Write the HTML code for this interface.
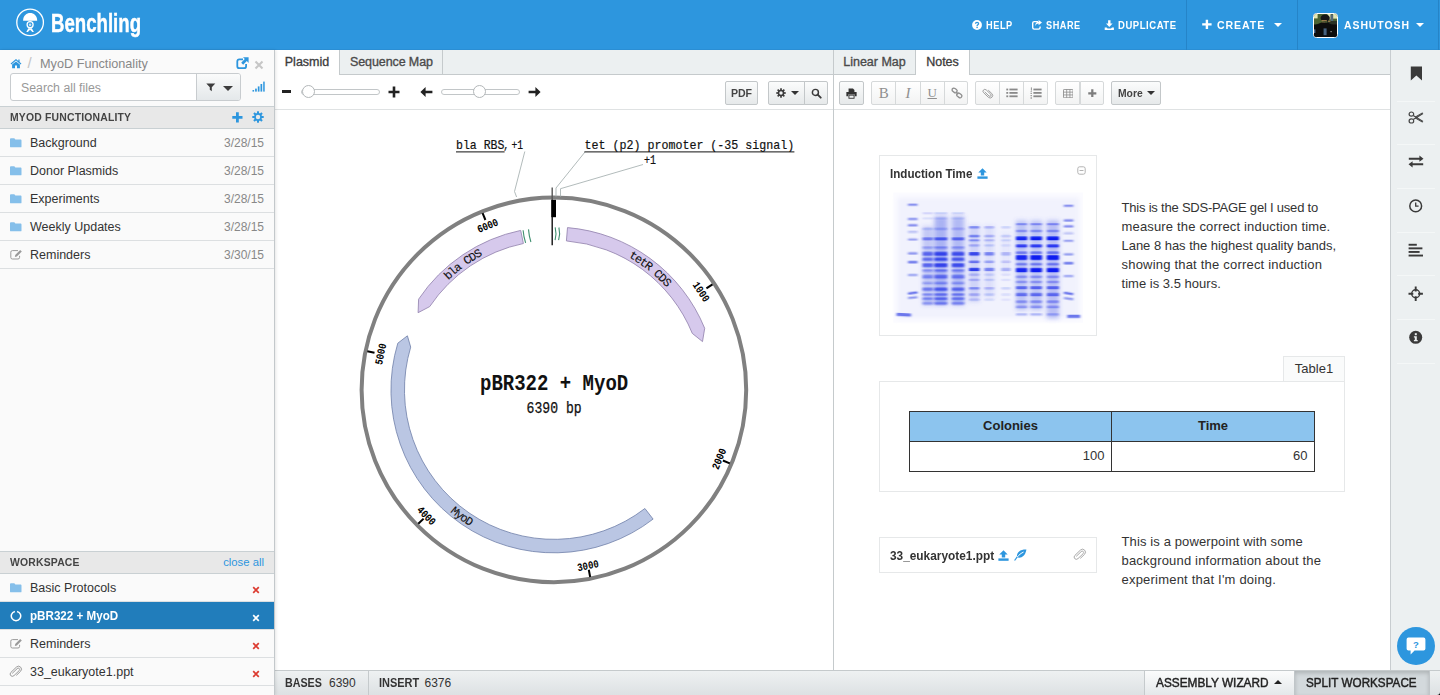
<!DOCTYPE html>
<html>
<head>
<meta charset="utf-8">
<title>Benchling</title>
<style>
*{box-sizing:border-box;margin:0;padding:0}
html,body{width:1440px;height:695px;overflow:hidden;background:#fff;font-family:"Liberation Sans",sans-serif;color:#333;font-size:13px}
.abs{position:absolute}
#hdr{position:absolute;left:0;top:0;width:1440px;height:50px;background:#2d96de;border-bottom:1px solid #2a8ed4}
#hdr .sep{position:absolute;top:0;width:1px;height:50px;background:#2584c8}
.nav{transform-origin:0 50%;position:absolute;top:0;height:50px;line-height:50px;color:#fff;font-weight:bold;font-size:10.5px;letter-spacing:.6px;white-space:nowrap}
#logo-txt{position:absolute;left:51px;top:5.8px;-webkit-text-stroke:.45px #fff;color:#fff;font-weight:bold;font-size:25px;line-height:34px;transform-origin:0 50%;transform:scaleX(.745);white-space:nowrap}
/* sidebar */
#side{position:absolute;left:0;top:50px;width:275px;height:645px;background:#fafafa;border-right:1px solid #c3c8cb;box-shadow:1px 0 3px rgba(0,0,0,.10);z-index:5}
.sechead{position:absolute;left:0;width:274px;height:23px;background:#e8e8e8;border-top:1px solid #c9d0d3;border-bottom:1px solid #c9d0d3;font-weight:bold;font-size:11px;line-height:21px;color:#444;padding-left:10px;letter-spacing:.2px;white-space:nowrap}
.sh{display:inline-block;transform-origin:0 50%;transform:scaleX(.945)}
.row{position:absolute;left:0;width:274px;height:28px;border-bottom:1px solid #dcdfe1;font-size:12.5px;line-height:27px;color:#333}
.row .nm{position:absolute;left:30px;top:1px;white-space:nowrap}
.row .dt{position:absolute;right:10px;top:1px;color:#888;font-size:12px}
.row .x{position:absolute;left:0;top:0;color:#dc3b30}
.row.sel{background:#217dbb;color:#fff}
.row.sel .x{color:#fff}
/* main */
.tabbar{position:absolute;top:50px;height:25px;background:#ecf0f1;border-bottom:1px solid #c5cacc}
.tab{position:absolute;top:0;height:25px;line-height:24px;font-size:12.5px;color:#4a4a4a;-webkit-text-stroke:.33px #4a4a4a;border-right:1px solid #c5cacc;padding:0 10px;white-space:nowrap}
.tab.act{background:#fff;height:26px;color:#333}
.tbar{position:absolute;top:75px;height:35px;background:#fff;border-bottom:1px solid #dfe2e3}
.btn{position:absolute;height:24px;border:1px solid #c3c7c9;border-radius:2px;background:linear-gradient(#fbfcfc,#e6e9ea);font-size:11.5px;line-height:22px;text-align:center;color:#444;font-weight:bold}
.btn.lt{background:linear-gradient(#fff,#f2f3f3);border-color:#d6d9da;color:#999}
.para{font-size:13px;line-height:19px;color:#333;white-space:nowrap}
.th{height:29px;line-height:27.6px;text-align:center;font-weight:bold;font-size:13px;color:#222}
.td{height:30px;line-height:27.6px;text-align:right;font-size:13px;color:#333}
#status{position:absolute;left:275px;top:670px;width:1165px;height:25px;background:linear-gradient(#eef1f2,#dde1e3);border-top:1px solid #c5cacc;font-size:12px;line-height:24px;color:#333}
.sb{display:inline-block;transform-origin:0 50%}
#rail{position:absolute;left:1390px;top:50px;width:50px;height:620px;background:#ecf0f1;border-left:1px solid #c8cdd0}
</style>
</head>
<body>
<!-- HEADER -->
<div id="hdr">
  <svg class="abs" style="left:15px;top:7px" width="31" height="31" viewBox="0 0 31 31">
    <circle cx="15.1" cy="15.4" r="13.3" fill="none" stroke="#fff" stroke-width="1.3"/>
    <path d="M8.1 13.7 C8.1 3.5 22.2 3.5 22.2 13.7 Z" fill="#fff"/>
    <circle cx="15.1" cy="17.7" r="3" fill="none" stroke="#fff" stroke-width="1.3"/>
    <circle cx="15.1" cy="17.7" r="1.3" fill="#fff" opacity=".75"/>
    <path d="M11.3 24.9 L13.4 21.2 L16.8 21.2 L18.9 24.9 L17.3 24.9 L15.1 22.7 L12.9 24.9 Z" fill="#fff"/>
  </svg>
  <div id="logo-txt">Benchling</div>
  <!-- help icon -->
  <svg class="abs" style="left:971px;top:19px" width="12" height="12" viewBox="0 0 12 12"><circle cx="6" cy="6" r="4.9" fill="#fff"/><path d="M4.5 4.7 C4.5 2.9 7.6 2.9 7.6 4.7 C7.6 5.8 6.1 5.8 6.1 7" fill="none" stroke="#2d96de" stroke-width="1.3"/><rect x="5.4" y="7.7" width="1.4" height="1.4" fill="#2d96de"/></svg>
  <div class="nav" id="n1" style="left:985.5px;transform:scaleX(.879)">HELP</div>
  <!-- share icon -->
  <svg class="abs" style="left:1031px;top:19px" width="12" height="12" viewBox="0 0 12 12"><path d="M7 2.6 H3.2 Q1.7 2.6 1.7 4.1 V8.6 Q1.7 10.1 3.2 10.1 H7.6 Q9.1 10.1 9.1 8.6 V7.6" fill="none" stroke="#fff" stroke-width="1.4"/><path d="M7.6 0.9 L11 3.6 L7.6 6.3 V4.6 Q5.2 4.6 4.4 7 Q4 2.9 7.6 2.7 Z" fill="#fff"/></svg>
  <div class="nav" id="n2" style="left:1045.8px;transform:scaleX(.872)">SHARE</div>
  <!-- download icon -->
  <svg class="abs" style="left:1104px;top:19px" width="11" height="12" viewBox="0 0 11 12"><path d="M4.1 1.2 H6.5 V4.6 H8.6 L5.3 8 L2 4.6 H4.1 Z" fill="#fff"/><path d="M0.7 8.6 H2.6 L3.6 9.6 H7 L8 8.6 H9.9 V10.9 H0.7 Z" fill="#fff"/></svg>
  <div class="nav" id="n3" style="left:1117.5px;transform:scaleX(.905)">DUPLICATE</div>
  <div class="sep" style="left:1186px"></div>
  <svg class="abs" style="left:1201px;top:19px" width="12" height="12" viewBox="0 0 12 12"><path d="M4.7 0.8 H7.1 V4.2 H10.6 V6.6 H7.1 V10.1 H4.7 V6.6 H1.2 V4.2 H4.7 Z" fill="#fff"/></svg>
  <div class="nav" id="n4" style="left:1217.4px;transform:scaleX(.927);font-size:11.4px;letter-spacing:1px">CREATE</div>
  <div class="abs" style="left:1274px;top:23px;width:0;height:0;border-left:4px solid transparent;border-right:4px solid transparent;border-top:4px solid #fff"></div>
  <div class="sep" style="left:1297px"></div>
  <div class="sep" style="left:1438px"></div>
  <!-- avatar -->
  <svg class="abs" style="left:1313px;top:13px" width="25" height="25" viewBox="0 0 25 25">
    <defs><clipPath id="avc"><rect x="1" y="1" width="23" height="23" rx="2"/></clipPath><filter id="avb"><feGaussianBlur stdDeviation="0.55"/></filter></defs>
    <rect x="0.5" y="0.5" width="24" height="24" rx="3" fill="#0c0d0e" stroke="#fff" stroke-width="1"/>
    <g clip-path="url(#avc)"><g filter="url(#avb)">
      <rect x="1" y="1" width="23" height="11.5" fill="#4b6230"/>
      <rect x="1" y="1" width="3.6" height="4.4" fill="#e6e8b4"/>
      <rect x="14.5" y="1" width="3.2" height="5.4" fill="#dfe3b0"/>
      <rect x="20" y="1" width="4" height="4.6" fill="#dfe4b2"/>
      <rect x="17.6" y="1.6" width="2.6" height="9" fill="#55697a"/>
      <rect x="14" y="8" width="10" height="5" fill="#2b3326"/>
      <ellipse cx="12.2" cy="5" rx="4.6" ry="3.6" fill="#121312"/>
      <rect x="8.6" y="7.2" width="5.2" height="1" fill="#b9935a"/>
      <rect x="8.8" y="9" width="3.4" height="2.6" fill="#7d6a45"/>
      <rect x="15" y="7.8" width="2.4" height="0.9" fill="#b98f55"/>
      <rect x="1" y="11.5" width="23" height="12.5" fill="#0c0d0e"/>
      <path d="M1 12.5 L8.5 9.5 L15 9.8 L24 14 V24 H1 Z" fill="#0e0f10"/>
      <rect x="10.6" y="15.4" width="3" height="6.8" fill="#46627f"/>
      <rect x="1" y="16.4" width="1.4" height="3.6" fill="#4d6f94"/>
      <rect x="17.4" y="18" width="1.4" height="1.2" fill="#8a8a86"/>
    </g></g>
  </svg>
  <div class="nav" id="n5" style="left:1343.6px;transform:scaleX(.919);font-size:11.4px;letter-spacing:1px">ASHUTOSH</div>
  <div class="abs" style="left:1415.5px;top:23px;width:0;height:0;border-left:4px solid transparent;border-right:4px solid transparent;border-top:4px solid #fff"></div>
</div>

<!-- SIDEBAR -->
<div id="side">
  <!-- home -->
  <svg class="abs" style="left:10px;top:8px" width="12" height="11" viewBox="0 0 12 11"><path d="M6 1 L0.6 5.6 L1.3 6.4 L6 2.5 L10.7 6.4 L11.4 5.6 L9.6 4.1 V1.6 H8.3 V3 Z" fill="#2d96de"/><path d="M6 3.4 L2.1 6.6 V10.3 H5 V7.6 H7 V10.3 H9.9 V6.6 Z" fill="#2d96de"/></svg>
  <div class="abs" style="left:27.5px;top:4px;font-size:15px;color:#c4c4c4">/</div>
  <div class="abs" id="crumb" style="left:40px;top:6.5px;font-size:12.7px;color:#888;white-space:nowrap">MyoD Functionality</div>
  <!-- external link -->
  <svg class="abs" style="left:236px;top:7px" width="13" height="13" viewBox="0 0 13 13"><path d="M7 2.4 H3.3 Q1.3 2.4 1.3 4.4 V9.2 Q1.3 11.2 3.3 11.2 H8.1 Q10.1 11.2 10.1 9.2 V7" fill="none" stroke="#2d96de" stroke-width="1.8"/><path d="M7 0.3 H12.6 V5.9 L10.8 4.1 L7.2 7.7 L5.2 5.7 L8.8 2.1 Z" fill="#2d96de"/></svg>
  <svg class="abs" style="left:254px;top:10px" width="10" height="10" viewBox="0 0 10 10"><path d="M1.5 1.5 L8.5 8.5 M8.5 1.5 L1.5 8.5" stroke="#c6c6c6" stroke-width="2.1"/></svg>
  <div class="abs" style="left:10px;top:23px;width:231px;height:28px;border:1px solid #c8cccf;border-radius:3px;background:#fff"></div>
  <div class="abs" style="left:196px;top:24px;width:44px;height:26px;border-left:1px solid #c8cccf;background:linear-gradient(#fafbfb,#e4e8ea);border-radius:0 2px 2px 0"></div>
  <div class="abs" id="srch" style="left:21px;top:30.5px;font-size:12.3px;color:#999">Search all files</div>
  <!-- filter -->
  <svg class="abs" style="left:206px;top:33px" width="10" height="9" viewBox="0 0 10 9"><path d="M0.3 0.5 H9.3 L5.8 4.3 V8.3 L3.8 6.8 V4.3 Z" fill="#3d3d3d"/></svg>
  <div class="abs" style="left:223px;top:36px;width:0;height:0;border-left:5px solid transparent;border-right:5px solid transparent;border-top:5px solid #3d3d3d"></div>
  <!-- signal -->
  <svg class="abs" style="left:252px;top:31px" width="13" height="12" viewBox="0 0 13 12"><rect x="0.5" y="9" width="1.6" height="1.6" fill="#2d96de"/><rect x="3.1" y="7.6" width="1.7" height="3" fill="#2d96de"/><rect x="5.8" y="5.4" width="1.7" height="5.2" fill="#2d96de"/><rect x="8.5" y="3" width="1.7" height="7.6" fill="#2d96de"/><rect x="11.2" y="0.6" width="1.5" height="10" fill="#2d96de"/></svg>
  <div class="sechead" style="top:56px"><span class="sh" id="sh1">MYOD FUNCTIONALITY</span>
    <svg class="abs" style="left:232px;top:5px" width="11" height="11" viewBox="0 0 11 11"><path d="M4 0.3 H6.8 V4 H10.5 V6.8 H6.8 V10.5 H4 V6.8 H0.3 V4 H4 Z" fill="#2d96de"/></svg>
    <svg class="abs" style="left:252px;top:4px" width="12" height="12" viewBox="0 0 12 12"><g fill="#2d96de"><circle cx="6" cy="6" r="3.9"/><rect x="5" y="0.3" width="2" height="11.4"/><rect x="5" y="0.3" width="2" height="11.4" transform="rotate(45 6 6)"/><rect x="5" y="0.3" width="2" height="11.4" transform="rotate(90 6 6)"/><rect x="5" y="0.3" width="2" height="11.4" transform="rotate(135 6 6)"/></g><circle cx="6" cy="6" r="2.2" fill="#e8e8e8"/></svg>
  </div>
  <div class="row" style="top:79px"><svg class="abs" style="left:10px;top:9px" width="12" height="10" viewBox="0 0 12 10"><path d="M0 1.2 Q0 0.3 0.9 0.3 H4 Q4.7 0.3 5 1 L5.3 1.6 H10.6 Q11.5 1.6 11.5 2.5 V8.4 Q11.5 9.3 10.6 9.3 H0.9 Q0 9.3 0 8.4 Z" fill="#85bfea"/></svg><span class="nm">Background</span><span class="dt">3/28/15</span></div>
  <div class="row" style="top:107px"><svg class="abs" style="left:10px;top:9px" width="12" height="10" viewBox="0 0 12 10"><path d="M0 1.2 Q0 0.3 0.9 0.3 H4 Q4.7 0.3 5 1 L5.3 1.6 H10.6 Q11.5 1.6 11.5 2.5 V8.4 Q11.5 9.3 10.6 9.3 H0.9 Q0 9.3 0 8.4 Z" fill="#85bfea"/></svg><span class="nm">Donor Plasmids</span><span class="dt">3/28/15</span></div>
  <div class="row" style="top:135px"><svg class="abs" style="left:10px;top:9px" width="12" height="10" viewBox="0 0 12 10"><path d="M0 1.2 Q0 0.3 0.9 0.3 H4 Q4.7 0.3 5 1 L5.3 1.6 H10.6 Q11.5 1.6 11.5 2.5 V8.4 Q11.5 9.3 10.6 9.3 H0.9 Q0 9.3 0 8.4 Z" fill="#85bfea"/></svg><span class="nm">Experiments</span><span class="dt">3/28/15</span></div>
  <div class="row" style="top:163px"><svg class="abs" style="left:10px;top:9px" width="12" height="10" viewBox="0 0 12 10"><path d="M0 1.2 Q0 0.3 0.9 0.3 H4 Q4.7 0.3 5 1 L5.3 1.6 H10.6 Q11.5 1.6 11.5 2.5 V8.4 Q11.5 9.3 10.6 9.3 H0.9 Q0 9.3 0 8.4 Z" fill="#85bfea"/></svg><span class="nm">Weekly Updates</span><span class="dt">3/28/15</span></div>
  <div class="row" style="top:191px"><svg class="abs" style="left:10px;top:8px" width="13" height="11" viewBox="0 0 13 11"><path d="M8 1.6 H2.4 Q0.8 1.6 0.8 3.2 V8.4 Q0.8 10 2.4 10 H8 Q9.6 10 9.6 8.4 V6.8" fill="none" stroke="#9a9a9a" stroke-width="1"/><path d="M5.2 6 L10.2 1 L11.8 2.6 L6.8 7.6 L4.9 7.9 Z" fill="#9a9a9a"/></svg><span class="nm">Reminders</span><span class="dt">3/30/15</span></div>

  <div class="sechead" style="top:501px"><span class="sh" id="sh2">WORKSPACE</span><span style="position:absolute;right:10px;top:0;color:#2d96de;font-weight:normal;font-size:11.3px;letter-spacing:0">close all</span></div>
  <div class="row" style="top:524px"><svg class="abs" style="left:10px;top:9px" width="12" height="10" viewBox="0 0 12 10"><path d="M0 1.2 Q0 0.3 0.9 0.3 H4 Q4.7 0.3 5 1 L5.3 1.6 H10.6 Q11.5 1.6 11.5 2.5 V8.4 Q11.5 9.3 10.6 9.3 H0.9 Q0 9.3 0 8.4 Z" fill="#85bfea"/></svg><span class="nm">Basic Protocols</span><span class="x"><svg class="abs" style="left:252px;top:11.5px" width="8" height="8" viewBox="0 0 8 8"><path d="M1.2 1.2 L6.8 6.8 M6.8 1.2 L1.2 6.8" stroke="currentColor" stroke-width="1.7"/></svg></span></div>
  <div class="row sel" style="top:552px"><svg class="abs" style="left:10px;top:8px" width="12" height="12" viewBox="0 0 12 12"><path d="M7.1 1.4 A4.7 4.7 0 1 1 4.9 1.4" fill="none" stroke="#fff" stroke-width="1.5"/></svg><span class="nm" style="font-weight:bold;transform-origin:0 50%;transform:scaleX(.93)">pBR322 + MyoD</span><span class="x"><svg class="abs" style="left:252px;top:11.5px" width="8" height="8" viewBox="0 0 8 8"><path d="M1.2 1.2 L6.8 6.8 M6.8 1.2 L1.2 6.8" stroke="currentColor" stroke-width="1.7"/></svg></span></div>
  <div class="row" style="top:580px"><svg class="abs" style="left:10px;top:8px" width="13" height="11" viewBox="0 0 13 11"><path d="M8 1.6 H2.4 Q0.8 1.6 0.8 3.2 V8.4 Q0.8 10 2.4 10 H8 Q9.6 10 9.6 8.4 V6.8" fill="none" stroke="#9a9a9a" stroke-width="1"/><path d="M5.2 6 L10.2 1 L11.8 2.6 L6.8 7.6 L4.9 7.9 Z" fill="#9a9a9a"/></svg><span class="nm">Reminders</span><span class="x"><svg class="abs" style="left:252px;top:11.5px" width="8" height="8" viewBox="0 0 8 8"><path d="M1.2 1.2 L6.8 6.8 M6.8 1.2 L1.2 6.8" stroke="currentColor" stroke-width="1.7"/></svg></span></div>
  <div class="row" style="top:608px"><svg class="abs" style="left:9px;top:7px" width="14" height="13" viewBox="0 0 14 13"><path d="M3.2 8.4 L8.2 3.6 Q9.3 2.6 10.3 3.6 Q11.2 4.6 10.2 5.6 L5 10.6 Q3.2 12.2 1.7 10.6 Q0.3 9 1.9 7.4 L7.4 2.1 Q9.6 0.1 11.7 2.2 Q13.6 4.3 11.5 6.4 L7.3 10.4" fill="none" stroke="#9a9a9a" stroke-width="1"/></svg><span class="nm">33_eukaryote1.ppt</span><span class="x"><svg class="abs" style="left:252px;top:11.5px" width="8" height="8" viewBox="0 0 8 8"><path d="M1.2 1.2 L6.8 6.8 M6.8 1.2 L1.2 6.8" stroke="currentColor" stroke-width="1.7"/></svg></span></div>
</div>

<!-- LEFT PANEL (plasmid) -->
<div class="tabbar" style="left:275px;width:559px">
  <div class="tab act" style="left:0;width:65px;padding:0;text-align:center">Plasmid</div>
  <div class="tab" style="left:65px;padding:0 9px 0 10px;letter-spacing:-.1px">Sequence Map</div>
</div>
<div class="tbar" style="left:275px;width:559px">
  <!-- zoom slider -->
  <div class="abs" style="left:7px;top:15.3px;width:9px;height:2.6px;background:#222"></div>
  <div class="abs" style="left:26px;top:13.5px;width:79px;height:6px;border:1px solid #c2c6c8;border-radius:3px;background:#fff"></div>
  <div class="abs" style="left:26.5px;top:10px;width:13px;height:13px;border:1px solid #b3b7b9;border-radius:50%;background:#fff"></div>
  <svg class="abs" style="left:113px;top:11px" width="12" height="12" viewBox="0 0 12 12"><path d="M4.7 0.5 H7.3 V4.7 H11.5 V7.3 H7.3 V11.5 H4.7 V7.3 H0.5 V4.7 H4.7 Z" fill="#222"/></svg>
  <!-- rotate slider -->
  <svg class="abs" style="left:145px;top:11px" width="13" height="12" viewBox="0 0 13 12"><path d="M0.4 6 L5.6 1 V4.7 H12.4 V7.3 H5.6 V11 Z" fill="#222"/></svg>
  <div class="abs" style="left:165.5px;top:13.5px;width:79px;height:6px;border:1px solid #c2c6c8;border-radius:3px;background:#fff"></div>
  <div class="abs" style="left:197.5px;top:10px;width:13px;height:13px;border:1px solid #b3b7b9;border-radius:50%;background:#fff"></div>
  <svg class="abs" style="left:253px;top:11px" width="13" height="12" viewBox="0 0 13 12"><path d="M12.6 6 L7.4 1 V4.7 H0.6 V7.3 H7.4 V11 Z" fill="#222"/></svg>
  <!-- buttons -->
  <div class="btn" style="left:450px;top:6px;width:33px"><span style="display:inline-block;transform:scaleX(.92)">PDF</span></div>
  <div class="btn" style="left:493px;top:6px;width:37px;border-radius:2px 0 0 2px">
    <svg class="abs" style="left:6.5px;top:6px" width="10" height="10" viewBox="0 0 12 12"><g fill="#3a3a3a"><circle cx="6" cy="6" r="3.9"/><rect x="5" y="0.3" width="2" height="11.4"/><rect x="5" y="0.3" width="2" height="11.4" transform="rotate(45 6 6)"/><rect x="5" y="0.3" width="2" height="11.4" transform="rotate(90 6 6)"/><rect x="5" y="0.3" width="2" height="11.4" transform="rotate(135 6 6)"/></g><circle cx="6" cy="6" r="2.1" fill="#f1f3f4"/></svg>
    <div class="abs" style="left:22px;top:8.5px;width:0;height:0;border-left:4px solid transparent;border-right:4px solid transparent;border-top:4px solid #333"></div>
  </div>
  <div class="btn" style="left:529px;top:6px;width:24px;border-radius:0 2px 2px 0">
    <svg class="abs" style="left:5.5px;top:5.5px" width="11" height="11" viewBox="0 0 12 12"><circle cx="4.8" cy="4.8" r="3.3" fill="none" stroke="#3a3a3a" stroke-width="1.6"/><path d="M7.3 7.3 L10.6 10.6" stroke="#3a3a3a" stroke-width="2" stroke-linecap="round"/></svg>
  </div>
</div>
<div class="abs" style="left:833px;top:50px;width:1px;height:620px;background:#c5cacc"></div>

<!--PLASMID-START-->
<svg class="abs" style="left:275px;top:110px" width="558" height="560" viewBox="275 110 558 560" font-family="Liberation Mono, monospace">
<circle cx="553.9" cy="389.9" r="192.3" fill="none" stroke="#808080" stroke-width="4"/>
<path d="M520.7 230.4 A162.9 162.9 0 0 0 418.6 299.2 L418.1 312.7 L429.7 306.6 A149.5 149.5 0 0 1 523.4 243.5 Z" fill="#d6c9ec" stroke="#8f7fab" stroke-width="0.8"/>
<path d="M567.5 227.6 A162.9 162.9 0 0 1 704.7 328.3 L702.5 341.6 L692.3 333.4 A149.5 149.5 0 0 0 566.4 240.9 Z" fill="#d6c9ec" stroke="#8f7fab" stroke-width="0.8"/>
<path d="M653.1 519.1 A162.9 162.9 0 0 1 397.8 343.2 L407.4 335.8 L410.7 347.1 A149.5 149.5 0 0 0 644.9 508.5 Z" fill="#bac6e3" stroke="#6f7fa8" stroke-width="0.8"/>
<path d="M706.4 288.4 L712.5 284.3" stroke="#000" stroke-width="2"/>
<text x="691.3" y="291.2" transform="rotate(56.34 702.1 291.2)" font-size="10.9" font-weight="bold" dy="4.6" textLength="21.6" lengthAdjust="spacingAndGlyphs">1000</text>
<path d="M722.9 460.5 L729.8 463.4" stroke="#000" stroke-width="2"/>
<text x="707.3" y="458.5" transform="rotate(-67.32 718.1 458.5)" font-size="10.9" font-weight="bold" dy="4.6" textLength="21.6" lengthAdjust="spacingAndGlyphs">2000</text>
<path d="M588.8 569.7 L590.2 577.0" stroke="#000" stroke-width="2"/>
<text x="577.0" y="564.6" transform="rotate(-10.99 587.8 564.6)" font-size="10.9" font-weight="bold" dy="4.6" textLength="21.6" lengthAdjust="spacingAndGlyphs">3000</text>
<path d="M423.6 518.6 L418.3 523.8" stroke="#000" stroke-width="2"/>
<text x="416.5" y="515.0" transform="rotate(45.35 427.3 515.0)" font-size="10.9" font-weight="bold" dy="4.6" textLength="21.6" lengthAdjust="spacingAndGlyphs">4000</text>
<path d="M374.5 352.8 L367.3 351.3" stroke="#000" stroke-width="2"/>
<text x="368.8" y="353.8" transform="rotate(281.69 379.6 353.8)" font-size="10.9" font-weight="bold" dy="4.6" textLength="21.6" lengthAdjust="spacingAndGlyphs">5000</text>
<path d="M485.4 220.0 L482.6 213.1" stroke="#000" stroke-width="2"/>
<text x="476.5" y="224.8" transform="rotate(338.03 487.3 224.8)" font-size="10.9" font-weight="bold" dy="4.6" textLength="21.6" lengthAdjust="spacingAndGlyphs">6000</text>
<defs>
<path id="tp-bla" d="M421.5 314.7 A152.3 152.3 0 0 1 522.8 240.8"/>
<path id="tp-tet" d="M566.6 238.1 A152.3 152.3 0 0 1 698.7 342.8"/>
<path id="tp-myo" d="M403.7 334.5 A160.1 160.1 0 0 0 652.1 516.3"/>
</defs>
<text font-size="11.8" fill="#111" stroke="#111" stroke-width=".12" letter-spacing="-1.1"><textPath href="#tp-bla" startOffset="50%" text-anchor="middle">bla CDS</textPath></text>
<text font-size="11.8" fill="#111" stroke="#111" stroke-width=".12" letter-spacing="-1.1"><textPath href="#tp-tet" startOffset="50%" text-anchor="middle">tetR CDS</textPath></text>
<text font-size="11.8" fill="#111" stroke="#111" stroke-width=".12" letter-spacing="-1.1"><textPath href="#tp-myo" startOffset="50%" text-anchor="middle">MyoD</textPath></text>
<path d="M552.2 187.5 L552.2 200" stroke="#555" stroke-width="1.4"/>
<path d="M552.2 200 L552.2 245.2" stroke="#111" stroke-width="1.4"/>
<rect x="551.3" y="199.8" width="4.7" height="17.4" fill="#000"/>
<path d="M523.1 230.2 Q523.6 236.5 525.6 242.8" stroke="#3f8f6f" stroke-width="1.1" fill="none"/>
<path d="M528.5 229.4 Q529 235.8 530.9 242" stroke="#3f8f6f" stroke-width="1.1" fill="none"/>
<path d="M555.2 227.4 Q556.8 233.7 555.1 240.2" stroke="#3f8f6f" stroke-width="1.1" fill="none"/>
<path d="M558.9 227.5 Q560.5 233.8 558.6 240.2" stroke="#3f8f6f" stroke-width="1.1" fill="none"/>
<path d="M524.8 151.5 L514.5 191.5 L516.6 197" stroke="#a9b3b3" stroke-width="0.9" fill="none"/>
<path d="M585 152 L556 188 L556 196.5" stroke="#a9b3b3" stroke-width="0.9" fill="none"/>
<path d="M643 164.5 L560.5 188.7 L560.5 196.5" stroke="#a9b3b3" stroke-width="0.9" fill="none"/>
<text x="456" y="149.4" font-size="13.4" fill="#111" stroke="#111" stroke-width=".2" lengthAdjust="spacingAndGlyphs" textLength="48.4">bla RBS</text>
<path d="M456 151.9 H504.6" stroke="#111" stroke-width="1"/>
<text x="503.2" y="149.4" font-size="13.4" fill="#111" stroke="#111" stroke-width=".2" lengthAdjust="spacingAndGlyphs" textLength="6">,</text>
<text x="511.4" y="149.4" font-size="13.4" fill="#111" stroke="#111" stroke-width=".2" lengthAdjust="spacingAndGlyphs" textLength="11.6">+1</text>
<text x="584.6" y="149.4" font-size="13.4" fill="#111" stroke="#111" stroke-width=".2" lengthAdjust="spacingAndGlyphs" textLength="209.6">tet (p2) promoter (-35 signal)</text>
<path d="M584.4 151.9 H794.4" stroke="#111" stroke-width="1"/>
<text x="644" y="164.3" font-size="13.4" fill="#111" stroke="#111" stroke-width=".2" lengthAdjust="spacingAndGlyphs" textLength="12">+1</text>
<text x="480" y="389.9" font-size="22.6" font-weight="bold" fill="#111" textLength="148.2" lengthAdjust="spacingAndGlyphs">pBR322 + MyoD</text>
<text x="526.6" y="412.9" font-size="15.8" fill="#111" stroke="#111" stroke-width=".25" textLength="55" lengthAdjust="spacingAndGlyphs">6390 bp</text>
</svg>
<!--PLASMID-END-->

<!-- RIGHT PANEL (notes) -->
<div class="tabbar" style="left:834px;width:556px">
  <div class="tab" style="left:0;width:82px;padding:0;text-align:center">Linear Map</div>
  <div class="tab act" style="left:82px;width:54px;padding:0;text-align:center">Notes</div>
</div>
<div class="tbar" style="left:834px;width:556px">
<div class="btn" style="left:5px;top:6px;width:25px"><svg class="abs" style="left:6px;top:6px" width="11" height="11" viewBox="0 0 12 12"><path d="M2.8 0.6 H7.6 L9.2 2.2 V4.4 H2.8 Z" fill="#333"/><path d="M0.4 4.4 H11.6 V9 H9.6 V7 H2.4 V9 H0.4 Z" fill="#333"/><rect x="3.2" y="7.8" width="5.6" height="3.4" fill="none" stroke="#333" stroke-width="1"/></svg></div>
<div class="btn lt" style="left:37.2px;top:6px;width:25.2px;border-radius:2px 0 0 2px"><span style="font-family:'Liberation Serif',serif;font-size:15px;font-weight:normal;color:#8f8f8f;line-height:23px">B</span></div>
<div class="btn lt" style="left:61.4px;top:6px;width:25.2px;border-radius:0"><span style="font-family:'Liberation Serif',serif;font-size:15px;font-style:italic;font-weight:normal;color:#8f8f8f;line-height:23px">I</span></div>
<div class="btn lt" style="left:85.6px;top:6px;width:25.2px;border-radius:0"><span style="font-family:'Liberation Serif',serif;font-size:13px;font-weight:normal;color:#8f8f8f;text-decoration:underline;line-height:22.5px">U</span></div>
<div class="btn lt" style="left:109.8px;top:6px;width:24.2px;border-radius:0 2px 2px 0"><svg class="abs" style="left:6px;top:5px" width="12" height="12" viewBox="0 0 12 12"><g fill="none" stroke="#8f8f8f" stroke-width="1.3"><rect x="0.9" y="1.6" width="5.4" height="3.6" rx="1.8" transform="rotate(38 3.6 3.4)"/><rect x="5.6" y="6.6" width="5.4" height="3.6" rx="1.8" transform="rotate(38 8.3 8.4)"/><path d="M4.8 4.6 L7.2 7.2"/></g></svg></div>
<div class="btn lt" style="left:141.0px;top:6px;width:25.2px;border-radius:2px 0 0 2px"><svg class="abs" style="left:6px;top:4.5px" width="12" height="13" viewBox="0 0 14 13"><path d="M10.8 4.6 L5.8 9.4 Q4.7 10.4 3.7 9.4 Q2.8 8.4 3.8 7.4 L9 2.4 Q10.8 0.8 12.3 2.4 Q13.7 4 12.1 5.6 L6.6 10.9 Q4.4 12.9 2.3 10.8 Q0.4 8.7 2.5 6.6 L6.7 2.6" fill="none" stroke="#9a9a9a" stroke-width="1.1" transform="translate(14 0) scale(-1 1)"/></svg></div>
<div class="btn lt" style="left:165.2px;top:6px;width:25.2px;border-radius:0"><svg class="abs" style="left:6px;top:6px" width="12" height="10" viewBox="0 0 12 10"><g fill="#8a8a8a"><rect x="0.3" y="0.6" width="1.9" height="1.8"/><rect x="3.4" y="0.6" width="8.2" height="1.8"/><rect x="0.3" y="4" width="1.9" height="1.8"/><rect x="3.4" y="4" width="8.2" height="1.8"/><rect x="0.3" y="7.4" width="1.9" height="1.8"/><rect x="3.4" y="7.4" width="8.2" height="1.8"/></g></svg></div>
<div class="btn lt" style="left:189.4px;top:6px;width:24.2px;border-radius:0 2px 2px 0"><svg class="abs" style="left:6px;top:5px" width="12" height="12" viewBox="0 0 12 12"><g fill="#8a8a8a"><rect x="3.4" y="1.6" width="8.2" height="1.8"/><rect x="3.4" y="5" width="8.2" height="1.8"/><rect x="3.4" y="8.4" width="8.2" height="1.8"/><rect x="0.9" y="0.4" width="0.9" height="3.2"/><rect x="0.5" y="4.4" width="1.5" height="0.8"/><rect x="0.5" y="6" width="1.5" height="0.8"/><rect x="0.5" y="8.2" width="1.5" height="0.8"/><rect x="0.5" y="9.8" width="1.5" height="0.8"/><rect x="0.5" y="11.2" width="1.5" height="0.6"/></g></svg></div>
<div class="btn lt" style="left:221.3px;top:6px;width:25.2px;border-radius:2px 0 0 2px"><svg class="abs" style="left:6.5px;top:6.5px" width="10.5" height="9.6" viewBox="0 0 12 11"><rect x="0.5" y="0.5" width="11" height="9.6" rx="0.8" fill="none" stroke="#8a8a8a" stroke-width="1"/><path d="M0.5 3.6 H11.5 M0.5 6.8 H11.5 M4.2 0.5 V10 M7.9 0.5 V10" stroke="#8a8a8a" stroke-width="0.9"/></svg></div>
<div class="btn lt" style="left:245.5px;top:6px;width:24.2px;border-radius:0 2px 2px 0"><svg class="abs" style="left:7.5px;top:6.5px" width="8.6" height="8.6" viewBox="0 0 10 10"><path d="M3.7 0.3 H6.3 V3.7 H9.7 V6.3 H6.3 V9.7 H3.7 V6.3 H0.3 V3.7 H3.7 Z" fill="#7d7d7d"/></svg></div>
<div class="btn" style="left:277px;top:6px;width:50px;text-align:left;padding-left:6px"><span style="display:inline-block;transform-origin:0 50%;transform:scaleX(.9)">More</span><div class="abs" style="left:35px;top:9px;width:0;height:0;border-left:4px solid transparent;border-right:4px solid transparent;border-top:4px solid #333"></div></div>
</div>


<!-- NOTES CONTENT -->
<div id="notes">
  <div class="abs" style="left:879px;top:155px;width:218px;height:181px;border:1px solid #e6e8e9;background:#fff"></div>
  <div class="abs" id="ind" style="left:889.5px;top:166.6px;font-size:12px;font-weight:bold;color:#333;white-space:nowrap;transform-origin:0 50%;transform:scaleX(.968)">Induction Time</div>
  <svg class="abs" style="left:977px;top:168px" width="11" height="11" viewBox="0 0 11 11"><path d="M5.5 0.3 L9.7 4.6 H7.2 V7.4 H3.8 V4.6 H1.3 Z" fill="#2d96de"/><rect x="0.4" y="8.4" width="10.2" height="2.4" fill="#2d96de"/></svg>
  <svg class="abs" style="left:1077px;top:166px" width="9" height="9" viewBox="0 0 10 10"><rect x="0.9" y="0.9" width="8.2" height="8.2" rx="2" fill="none" stroke="#aaa" stroke-width="1"/><path d="M2.8 5 H7.2" stroke="#aaa" stroke-width="1"/></svg>
<!--GEL-START-->
<svg class="abs" style="left:885px;top:185px" width="210" height="145" viewBox="0 0 1007 695">
<defs><filter id="gb" x="-20%" y="-20%" width="140%" height="140%"><feGaussianBlur stdDeviation="5 3.8"/></filter><filter id="gb2" x="-20%" y="-20%" width="140%" height="140%"><feGaussianBlur stdDeviation="11 10"/></filter></defs>
<rect x="40" y="36" width="910" height="624" fill="#fbfbff"/>
<rect x="60" y="60" width="870" height="580" fill="#f1f2fd" filter="url(#gb2)"/>
<g filter="url(#gb2)">
<rect x="180" y="200" width="50" height="375" fill="#5566e6" opacity="0.30"/>
<rect x="237" y="150" width="62" height="425" fill="#5566e6" opacity="0.45"/>
<rect x="320" y="150" width="60" height="425" fill="#5566e6" opacity="0.40"/>
<rect x="402" y="195" width="52" height="365" fill="#5566e6" opacity="0.22"/>
<rect x="476" y="195" width="48" height="345" fill="#5566e6" opacity="0.13"/>
<rect x="557" y="230" width="46" height="190" fill="#5566e6" opacity="0.08"/>
<rect x="628" y="170" width="54" height="430" fill="#5566e6" opacity="0.32"/>
<rect x="697" y="170" width="56" height="430" fill="#5566e6" opacity="0.32"/>
<rect x="776" y="170" width="58" height="470" fill="#5566e6" opacity="0.36"/>
</g>
<g filter="url(#gb)">
<rect x="110" y="89" width="46" height="11" rx="4" fill="#3545e4" opacity="0.55"/>
<rect x="110" y="157" width="46" height="11" rx="4" fill="#3545e4" opacity="0.55"/>
<rect x="110" y="187" width="46" height="11" rx="4" fill="#3545e4" opacity="0.60"/>
<rect x="110" y="219" width="46" height="11" rx="4" fill="#3545e4" opacity="0.25"/>
<rect x="110" y="256" width="46" height="11" rx="4" fill="#3545e4" opacity="0.45"/>
<rect x="110" y="322" width="46" height="11" rx="4" fill="#3545e4" opacity="0.50"/>
<rect x="110" y="364" width="46" height="11" rx="4" fill="#3545e4" opacity="0.70"/>
<rect x="110" y="426" width="46" height="11" rx="4" fill="#3545e4" opacity="0.45"/>
<rect x="110" y="512" width="46" height="11" rx="4" fill="#3545e4" opacity="0.75" transform="rotate(-6 133 518)"/>
<rect x="110" y="534" width="46" height="11" rx="4" fill="#3545e4" opacity="0.50" transform="rotate(-6 133 540)"/>
<rect x="857" y="94" width="46" height="11" rx="4" fill="#3545e4" opacity="0.55"/>
<rect x="857" y="164" width="46" height="11" rx="4" fill="#3545e4" opacity="0.55"/>
<rect x="857" y="192" width="46" height="11" rx="4" fill="#3545e4" opacity="0.60"/>
<rect x="857" y="226" width="46" height="11" rx="4" fill="#3545e4" opacity="0.25"/>
<rect x="857" y="262" width="46" height="11" rx="4" fill="#3545e4" opacity="0.45"/>
<rect x="857" y="326" width="46" height="11" rx="4" fill="#3545e4" opacity="0.50"/>
<rect x="857" y="369" width="46" height="11" rx="4" fill="#3545e4" opacity="0.70"/>
<rect x="857" y="431" width="46" height="11" rx="4" fill="#3545e4" opacity="0.45"/>
<rect x="857" y="514" width="46" height="11" rx="4" fill="#3545e4" opacity="0.75" transform="rotate(8 880 520)"/>
<rect x="857" y="539" width="46" height="11" rx="4" fill="#3545e4" opacity="0.50" transform="rotate(8 880 545)"/>
<rect x="55" y="614" width="70" height="16" rx="4" fill="#3545e4" opacity="0.70" transform="rotate(3 90 622)"/>
<rect x="874" y="622" width="62" height="16" rx="4" fill="#3545e4" opacity="0.70"/>
<rect x="180" y="131" width="50" height="8" rx="4" fill="#1c2ee8" opacity="0.14"/>
<rect x="180" y="156" width="50" height="8" rx="4" fill="#1c2ee8" opacity="0.11"/>
<rect x="180" y="205" width="50" height="10" rx="4" fill="#1c2ee8" opacity="0.22"/>
<rect x="180" y="251" width="50" height="14" rx="4" fill="#1c2ee8" opacity="0.52"/>
<rect x="180" y="294" width="50" height="12" rx="4" fill="#1c2ee8" opacity="0.30"/>
<rect x="180" y="321" width="50" height="18" rx="4" fill="#1c2ee8" opacity="0.64"/>
<rect x="180" y="348" width="50" height="16" rx="4" fill="#1c2ee8" opacity="0.60"/>
<rect x="180" y="376" width="50" height="18" rx="4" fill="#1c2ee8" opacity="0.64"/>
<rect x="180" y="404" width="50" height="12" rx="4" fill="#1c2ee8" opacity="0.38"/>
<rect x="180" y="431" width="50" height="18" rx="4" fill="#1c2ee8" opacity="0.45"/>
<rect x="180" y="464" width="50" height="12" rx="4" fill="#1c2ee8" opacity="0.30"/>
<rect x="180" y="492" width="50" height="16" rx="4" fill="#1c2ee8" opacity="0.52"/>
<rect x="180" y="519" width="50" height="12" rx="4" fill="#1c2ee8" opacity="0.41"/>
<rect x="180" y="538" width="50" height="14" rx="4" fill="#1c2ee8" opacity="0.45"/>
<rect x="180" y="560" width="50" height="14" rx="4" fill="#1c2ee8" opacity="0.38"/>
<rect x="237" y="131" width="62" height="8" rx="4" fill="#1c2ee8" opacity="0.18"/>
<rect x="237" y="156" width="62" height="8" rx="4" fill="#1c2ee8" opacity="0.15"/>
<rect x="237" y="205" width="62" height="10" rx="4" fill="#1c2ee8" opacity="0.30"/>
<rect x="237" y="251" width="62" height="14" rx="4" fill="#1c2ee8" opacity="0.70"/>
<rect x="237" y="294" width="62" height="12" rx="4" fill="#1c2ee8" opacity="0.40"/>
<rect x="237" y="321" width="62" height="18" rx="4" fill="#1c2ee8" opacity="0.85"/>
<rect x="237" y="348" width="62" height="16" rx="4" fill="#1c2ee8" opacity="0.80"/>
<rect x="237" y="376" width="62" height="18" rx="4" fill="#1c2ee8" opacity="0.85"/>
<rect x="237" y="404" width="62" height="12" rx="4" fill="#1c2ee8" opacity="0.50"/>
<rect x="237" y="431" width="62" height="18" rx="4" fill="#1c2ee8" opacity="0.60"/>
<rect x="237" y="464" width="62" height="12" rx="4" fill="#1c2ee8" opacity="0.40"/>
<rect x="237" y="492" width="62" height="16" rx="4" fill="#1c2ee8" opacity="0.70"/>
<rect x="237" y="519" width="62" height="12" rx="4" fill="#1c2ee8" opacity="0.55"/>
<rect x="237" y="538" width="62" height="14" rx="4" fill="#1c2ee8" opacity="0.60"/>
<rect x="237" y="560" width="62" height="14" rx="4" fill="#1c2ee8" opacity="0.50"/>
<rect x="320" y="131" width="60" height="8" rx="4" fill="#1c2ee8" opacity="0.16"/>
<rect x="320" y="156" width="60" height="8" rx="4" fill="#1c2ee8" opacity="0.14"/>
<rect x="320" y="205" width="60" height="10" rx="4" fill="#1c2ee8" opacity="0.27"/>
<rect x="320" y="251" width="60" height="14" rx="4" fill="#1c2ee8" opacity="0.63"/>
<rect x="320" y="294" width="60" height="12" rx="4" fill="#1c2ee8" opacity="0.36"/>
<rect x="320" y="321" width="60" height="18" rx="4" fill="#1c2ee8" opacity="0.77"/>
<rect x="320" y="348" width="60" height="16" rx="4" fill="#1c2ee8" opacity="0.72"/>
<rect x="320" y="376" width="60" height="18" rx="4" fill="#1c2ee8" opacity="0.77"/>
<rect x="320" y="404" width="60" height="12" rx="4" fill="#1c2ee8" opacity="0.45"/>
<rect x="320" y="431" width="60" height="18" rx="4" fill="#1c2ee8" opacity="0.54"/>
<rect x="320" y="464" width="60" height="12" rx="4" fill="#1c2ee8" opacity="0.36"/>
<rect x="320" y="492" width="60" height="16" rx="4" fill="#1c2ee8" opacity="0.63"/>
<rect x="320" y="519" width="60" height="12" rx="4" fill="#1c2ee8" opacity="0.50"/>
<rect x="320" y="538" width="60" height="14" rx="4" fill="#1c2ee8" opacity="0.54"/>
<rect x="320" y="560" width="60" height="14" rx="4" fill="#1c2ee8" opacity="0.45"/>
<rect x="403" y="197" width="50" height="12" rx="4" fill="#1c2ee8" opacity="0.45"/>
<rect x="403" y="239" width="50" height="12" rx="4" fill="#1c2ee8" opacity="0.50"/>
<rect x="403" y="260" width="50" height="10" rx="4" fill="#1c2ee8" opacity="0.45"/>
<rect x="403" y="285" width="50" height="10" rx="4" fill="#1c2ee8" opacity="0.30"/>
<rect x="403" y="322" width="50" height="16" rx="4" fill="#1c2ee8" opacity="0.85"/>
<rect x="403" y="362" width="50" height="12" rx="4" fill="#1c2ee8" opacity="0.60"/>
<rect x="403" y="397" width="50" height="16" rx="4" fill="#1c2ee8" opacity="0.90"/>
<rect x="403" y="425" width="50" height="10" rx="4" fill="#1c2ee8" opacity="0.25"/>
<rect x="403" y="450" width="50" height="10" rx="4" fill="#1c2ee8" opacity="0.30"/>
<rect x="403" y="489" width="50" height="12" rx="4" fill="#1c2ee8" opacity="0.45"/>
<rect x="403" y="519" width="50" height="12" rx="4" fill="#1c2ee8" opacity="0.30"/>
<rect x="403" y="545" width="50" height="10" rx="4" fill="#1c2ee8" opacity="0.20"/>
<rect x="477" y="197" width="46" height="12" rx="4" fill="#1c2ee8" opacity="0.27"/>
<rect x="477" y="239" width="46" height="12" rx="4" fill="#1c2ee8" opacity="0.30"/>
<rect x="477" y="260" width="46" height="10" rx="4" fill="#1c2ee8" opacity="0.27"/>
<rect x="477" y="285" width="46" height="10" rx="4" fill="#1c2ee8" opacity="0.18"/>
<rect x="477" y="322" width="46" height="16" rx="4" fill="#1c2ee8" opacity="0.51"/>
<rect x="477" y="362" width="46" height="12" rx="4" fill="#1c2ee8" opacity="0.36"/>
<rect x="477" y="397" width="46" height="16" rx="4" fill="#1c2ee8" opacity="0.54"/>
<rect x="477" y="425" width="46" height="10" rx="4" fill="#1c2ee8" opacity="0.15"/>
<rect x="477" y="450" width="46" height="10" rx="4" fill="#1c2ee8" opacity="0.18"/>
<rect x="477" y="489" width="46" height="12" rx="4" fill="#1c2ee8" opacity="0.27"/>
<rect x="477" y="519" width="46" height="12" rx="4" fill="#1c2ee8" opacity="0.18"/>
<rect x="477" y="545" width="46" height="10" rx="4" fill="#1c2ee8" opacity="0.12"/>
<rect x="558" y="197" width="44" height="12" rx="4" fill="#1c2ee8" opacity="0.15"/>
<rect x="558" y="239" width="44" height="12" rx="4" fill="#1c2ee8" opacity="0.17"/>
<rect x="558" y="260" width="44" height="10" rx="4" fill="#1c2ee8" opacity="0.15"/>
<rect x="558" y="285" width="44" height="10" rx="4" fill="#1c2ee8" opacity="0.10"/>
<rect x="558" y="322" width="44" height="16" rx="4" fill="#1c2ee8" opacity="0.28"/>
<rect x="558" y="362" width="44" height="12" rx="4" fill="#1c2ee8" opacity="0.20"/>
<rect x="558" y="397" width="44" height="16" rx="4" fill="#1c2ee8" opacity="0.30"/>
<rect x="558" y="425" width="44" height="10" rx="4" fill="#1c2ee8" opacity="0.08"/>
<rect x="558" y="450" width="44" height="10" rx="4" fill="#1c2ee8" opacity="0.10"/>
<rect x="558" y="489" width="44" height="12" rx="4" fill="#1c2ee8" opacity="0.15"/>
<rect x="558" y="519" width="44" height="12" rx="4" fill="#1c2ee8" opacity="0.10"/>
<rect x="558" y="545" width="44" height="10" rx="4" fill="#1c2ee8" opacity="0.07"/>
<rect x="628" y="183" width="54" height="10" rx="4" fill="#2636ea" opacity="0.43"/>
<rect x="628" y="215" width="54" height="10" rx="4" fill="#2636ea" opacity="0.47"/>
<rect x="628" y="246" width="54" height="18" rx="4" fill="#0c1cf0" opacity="0.95"/>
<rect x="628" y="285" width="54" height="14" rx="4" fill="#0c1cf0" opacity="0.81"/>
<rect x="628" y="319" width="54" height="12" rx="4" fill="#2636ea" opacity="0.57"/>
<rect x="628" y="337" width="54" height="22" rx="4" fill="#0c1cf0" opacity="0.95"/>
<rect x="628" y="374" width="54" height="12" rx="4" fill="#2636ea" opacity="0.52"/>
<rect x="628" y="398" width="54" height="20" rx="4" fill="#0c1cf0" opacity="0.95"/>
<rect x="628" y="435" width="54" height="10" rx="4" fill="#2636ea" opacity="0.43"/>
<rect x="628" y="460" width="54" height="10" rx="4" fill="#2636ea" opacity="0.43"/>
<rect x="628" y="485" width="54" height="14" rx="4" fill="#2636ea" opacity="0.66"/>
<rect x="628" y="517" width="54" height="16" rx="4" fill="#2636ea" opacity="0.62"/>
<rect x="628" y="554" width="54" height="12" rx="4" fill="#2636ea" opacity="0.43"/>
<rect x="628" y="579" width="54" height="12" rx="4" fill="#2636ea" opacity="0.38"/>
<rect x="628" y="614" width="54" height="12" rx="4" fill="#2636ea" opacity="0.28"/>
<rect x="697" y="183" width="56" height="10" rx="4" fill="#2636ea" opacity="0.45"/>
<rect x="697" y="215" width="56" height="10" rx="4" fill="#2636ea" opacity="0.50"/>
<rect x="697" y="246" width="56" height="18" rx="4" fill="#0c1cf0" opacity="1.00"/>
<rect x="697" y="285" width="56" height="14" rx="4" fill="#0c1cf0" opacity="0.85"/>
<rect x="697" y="319" width="56" height="12" rx="4" fill="#2636ea" opacity="0.60"/>
<rect x="697" y="337" width="56" height="22" rx="4" fill="#0c1cf0" opacity="1.00"/>
<rect x="697" y="374" width="56" height="12" rx="4" fill="#2636ea" opacity="0.55"/>
<rect x="697" y="398" width="56" height="20" rx="4" fill="#0c1cf0" opacity="1.00"/>
<rect x="697" y="435" width="56" height="10" rx="4" fill="#2636ea" opacity="0.45"/>
<rect x="697" y="460" width="56" height="10" rx="4" fill="#2636ea" opacity="0.45"/>
<rect x="697" y="485" width="56" height="14" rx="4" fill="#2636ea" opacity="0.70"/>
<rect x="697" y="517" width="56" height="16" rx="4" fill="#2636ea" opacity="0.65"/>
<rect x="697" y="554" width="56" height="12" rx="4" fill="#2636ea" opacity="0.45"/>
<rect x="697" y="579" width="56" height="12" rx="4" fill="#2636ea" opacity="0.40"/>
<rect x="697" y="614" width="56" height="12" rx="4" fill="#2636ea" opacity="0.30"/>
<rect x="776" y="183" width="58" height="10" rx="4" fill="#2636ea" opacity="0.45"/>
<rect x="776" y="215" width="58" height="10" rx="4" fill="#2636ea" opacity="0.50"/>
<rect x="776" y="246" width="58" height="18" rx="4" fill="#0c1cf0" opacity="1.00"/>
<rect x="776" y="285" width="58" height="14" rx="4" fill="#0c1cf0" opacity="0.85"/>
<rect x="776" y="319" width="58" height="12" rx="4" fill="#2636ea" opacity="0.60"/>
<rect x="776" y="337" width="58" height="22" rx="4" fill="#0c1cf0" opacity="1.00"/>
<rect x="776" y="374" width="58" height="12" rx="4" fill="#2636ea" opacity="0.55"/>
<rect x="776" y="398" width="58" height="20" rx="4" fill="#0c1cf0" opacity="1.00"/>
<rect x="776" y="435" width="58" height="10" rx="4" fill="#2636ea" opacity="0.45"/>
<rect x="776" y="460" width="58" height="10" rx="4" fill="#2636ea" opacity="0.45"/>
<rect x="776" y="485" width="58" height="14" rx="4" fill="#2636ea" opacity="0.70"/>
<rect x="776" y="517" width="58" height="16" rx="4" fill="#2636ea" opacity="0.65"/>
<rect x="776" y="554" width="58" height="12" rx="4" fill="#2636ea" opacity="0.45"/>
<rect x="776" y="579" width="58" height="12" rx="4" fill="#2636ea" opacity="0.40"/>
<rect x="776" y="614" width="58" height="12" rx="4" fill="#2636ea" opacity="0.30"/>
</g>
</svg>
<!--GEL-END-->
  <div class="abs para" id="p1" style="left:1121.5px;top:198px"><div style="letter-spacing:-0.206px">This is the SDS-PAGE gel I used to</div><div style="letter-spacing:0.167px">measure the correct induction time.</div><div style="letter-spacing:-0.024px">Lane 8 has the highest quality bands,</div><div style="letter-spacing:0.204px">showing that the correct induction</div><div style="letter-spacing:0.022px">time is 3.5 hours.</div></div>

  <!-- table -->
  <div class="abs" style="left:1283px;top:356px;width:62px;height:26px;border:1px solid #e6e8e9;border-bottom:none;background:#fafbfb;font-size:13px;line-height:24px;text-align:center;color:#333">Table1</div>
  <div class="abs" style="left:879px;top:381px;width:466px;height:111px;border:1px solid #e6e8e9;background:#fff"></div>
  <div class="abs" style="left:909px;top:411px;width:406px;height:61px;border:1px solid #333;background:#fff"></div>
  <div class="abs" style="left:910px;top:412px;width:404px;height:29px;background:#8cc4ee"></div>
  <div class="abs" style="left:909px;top:441px;width:406px;height:1px;background:#333"></div>
  <div class="abs" style="left:1111px;top:411px;width:1px;height:61px;background:#333"></div>
  <div class="abs th" style="left:910px;top:412px;width:201px">Colonies</div>
  <div class="abs th" style="left:1112px;top:412px;width:202px">Time</div>
  <div class="abs td" style="left:910px;top:442px;width:194.5px">100</div>
  <div class="abs td" style="left:1112px;top:442px;width:195.5px">60</div>

  <!-- file card -->
  <div class="abs" style="left:879px;top:537px;width:218px;height:36px;border:1px solid #e6e8e9;background:#fff"></div>
  <div class="abs" id="fn" style="left:889.5px;top:548.8px;font-size:12px;font-weight:bold;color:#333;white-space:nowrap;transform-origin:0 50%;transform:scaleX(.988)">33_eukaryote1.ppt</div>
  <svg class="abs" style="left:997.5px;top:549.6px" width="11" height="11" viewBox="0 0 11 11"><path d="M5.5 0.3 L9.7 4.6 H7.2 V7.4 H3.8 V4.6 H1.3 Z" fill="#2d96de"/><rect x="0.4" y="8.4" width="10.2" height="2.4" fill="#2d96de"/></svg>
  <svg class="abs" style="left:1014px;top:548.8px" width="13" height="12" viewBox="0 0 13 12"><path d="M12.4 0.6 C6.5 0.4 2.6 3 2.9 8 C5.5 9.6 11.2 8.6 12.4 0.6 Z" fill="#2d96de"/><path d="M9.6 3 C6 4.6 3.4 7.4 0.9 11.2" stroke="#fff" stroke-width="1" fill="none"/><path d="M3.2 7.9 L0.6 11.5" stroke="#2d96de" stroke-width="1.2" fill="none"/></svg>
  <svg class="abs" style="left:1073px;top:547.5px" width="14" height="13" viewBox="0 0 14 13"><path d="M3.2 8.4 L8.2 3.6 Q9.3 2.6 10.3 3.6 Q11.2 4.6 10.2 5.6 L5 10.6 Q3.2 12.2 1.7 10.6 Q0.3 9 1.9 7.4 L7.4 2.1 Q9.6 0.1 11.7 2.2 Q13.6 4.3 11.5 6.4 L7.3 10.4" fill="none" stroke="#a9a9a9" stroke-width="1"/></svg>
  <div class="abs para" id="p2" style="left:1121.5px;top:532px"><div style="letter-spacing:0.122px">This is a powerpoint with some</div><div style="letter-spacing:0.188px">background information about the</div><div style="letter-spacing:0.209px">experiment that I'm doing.</div></div>
</div>

<div id="rail">
  <div class="abs" style="left:6px;top:50.5px;width:38px;height:1px;background:rgba(255,255,255,.45)"></div><div class="abs" style="left:6px;top:94.2px;width:38px;height:1px;background:rgba(255,255,255,.45)"></div><div class="abs" style="left:6px;top:138.0px;width:38px;height:1px;background:rgba(255,255,255,.45)"></div><div class="abs" style="left:6px;top:181.7px;width:38px;height:1px;background:rgba(255,255,255,.45)"></div><div class="abs" style="left:6px;top:225.4px;width:38px;height:1px;background:rgba(255,255,255,.45)"></div><div class="abs" style="left:6px;top:269.1px;width:38px;height:1px;background:rgba(255,255,255,.45)"></div><div class="abs" style="left:6px;top:312.8px;width:38px;height:1px;background:rgba(255,255,255,.45)"></div>
  <!-- bookmark -->
  <svg class="abs" style="left:19px;top:16px" width="13" height="15" viewBox="0 0 13 15"><path d="M0.8 0.6 H12 V14.4 L6.4 9.6 L0.8 14.4 Z" fill="#3a3a3a"/></svg>
  <!-- scissors -->
  <svg class="abs" style="left:17px;top:61px" width="16" height="13" viewBox="0 0 16 13"><g fill="none" stroke="#444" stroke-width="1.2"><ellipse cx="3.4" cy="3.1" rx="2.3" ry="2.1"/><ellipse cx="3.4" cy="9.9" rx="2.3" ry="2.1"/><path d="M5.2 4.4 L15 10.6 M5.2 8.6 L15 2.4"/></g><path d="M7.5 6.5 L15.2 1.9 L14.2 1.6 L6.8 5.8 Z M7.5 6.5 L15.2 11.1 L14.2 11.4 L6.8 7.2 Z" fill="#444"/></svg>
  <!-- exchange -->
  <svg class="abs" style="left:17px;top:105px" width="16" height="13" viewBox="0 0 16 13"><path d="M0.8 2.7 H11.4 V0.5 L15.5 3.7 L11.4 6.7 V4.7 H0.8 Z" fill="#3a3a3a"/><path d="M15.2 8.3 H4.6 V6.3 L0.5 9.3 L4.6 12.5 V10.3 H15.2 Z" fill="#3a3a3a"/></svg>
  <!-- clock -->
  <svg class="abs" style="left:17px;top:148px" width="16" height="16" viewBox="0 0 16 16"><circle cx="7.7" cy="7.9" r="5.9" fill="none" stroke="#3a3a3a" stroke-width="1.5"/><path d="M7.7 4.4 V8.2 H10.6" fill="none" stroke="#3a3a3a" stroke-width="1.3"/></svg>
  <!-- align left -->
  <svg class="abs" style="left:17px;top:193px" width="16" height="14" viewBox="0 0 16 14"><g fill="#3a3a3a"><rect x="0.6" y="0.8" width="8.2" height="1.9"/><rect x="0.6" y="4.4" width="13.8" height="1.9"/><rect x="0.6" y="8" width="11" height="1.9"/><rect x="0.6" y="11.6" width="14.4" height="1.9"/></g></svg>
  <!-- crosshair -->
  <svg class="abs" style="left:17px;top:236px" width="16" height="16" viewBox="0 0 16 16"><circle cx="7.7" cy="7.8" r="4" fill="none" stroke="#3a3a3a" stroke-width="1.4"/><path d="M7.7 0.6 V5.4 M7.7 10.2 V15 M0.5 7.8 H5.3 M10.1 7.8 H14.9" stroke="#3a3a3a" stroke-width="1.9"/></svg>
  <!-- info -->
  <svg class="abs" style="left:17px;top:280px" width="16" height="16" viewBox="0 0 16 16"><circle cx="7.7" cy="7.3" r="6.5" fill="#3a3a3a"/><rect x="6.8" y="3.2" width="2" height="2" fill="#ecf0f1"/><path d="M5.9 6.2 H8.8 V10 H9.7 V11.2 H5.9 V10 H6.8 V7.4 H5.9 Z" fill="#ecf0f1"/></svg>
  <!-- help bubble -->
  <div class="abs" style="left:6px;top:576.5px;width:38px;height:38px;border-radius:50%;background:#2d96de"></div>
  <svg class="abs" style="left:15px;top:587px" width="20" height="19" viewBox="0 0 20 19"><path d="M2.4 0.6 H17.6 Q19.4 0.6 19.4 2.4 V11.8 Q19.4 13.6 17.6 13.6 H8.6 L4.6 17.6 V13.6 H2.4 Q0.6 13.6 0.6 11.8 V2.4 Q0.6 0.6 2.4 0.6 Z" fill="#fff"/><text x="10" y="10.8" font-family="Liberation Sans, sans-serif" font-size="9.5" font-weight="bold" fill="#2d96de" text-anchor="middle">?</text></svg>
</div>
<div id="status">
  <span class="abs" style="left:10px;top:0;white-space:nowrap"><b class="sb" id="sb1" style="transform:scaleX(.893)">BASES</b></span><span class="abs" style="left:54px;top:0">6390</span>
  <div class="abs" style="left:93px;top:0;width:1px;height:24px;background:#c5cacc"></div>
  <span class="abs" style="left:104px;top:0;white-space:nowrap"><b class="sb" id="sb2" style="transform:scaleX(.914)">INSERT</b></span><span class="abs" style="left:149.5px;top:0">6376</span>
  <div class="abs" style="left:869px;top:0;width:150px;height:24px;border-left:1px solid #c5cacc;background:linear-gradient(#fbfcfc,#e4e8ea)"></div>
  <span class="abs" style="left:880.5px;top:0;white-space:nowrap"><span class="sb" id="sb3" style="transform:scaleX(.946);font-size:12.5px;-webkit-text-stroke:.45px #222;color:#222">ASSEMBLY WIZARD</span></span>
  <div class="abs" style="left:998.5px;top:9px;width:0;height:0;border-left:4px solid transparent;border-right:4px solid transparent;border-bottom:4.5px solid #222"></div>
  <div class="abs" style="left:1019px;top:0;width:136px;height:24px;background:#d3d9dc;box-shadow:inset 0 2px 4px rgba(0,0,0,.18);border-left:1px solid #c0c6c9;border-right:1px solid #c0c6c9"></div>
  <span class="abs" style="left:1030.5px;top:0;white-space:nowrap"><span class="sb" id="sb4" style="transform:scaleX(.935);font-size:12.5px;-webkit-text-stroke:.45px #222;color:#222">SPLIT WORKSPACE</span></span>
</div>
<svg class="abs" style="left:0;top:692px" width="3" height="3" viewBox="0 0 5 5"><path d="M0 0 V5 H5 A5 5 0 0 1 0 0 Z" fill="#000"/></svg>
<svg class="abs" style="left:1437px;top:692px" width="3" height="3" viewBox="0 0 5 5"><path d="M5 0 V5 H0 A5 5 0 0 0 5 0 Z" fill="#000"/></svg>
</body>
</html>
